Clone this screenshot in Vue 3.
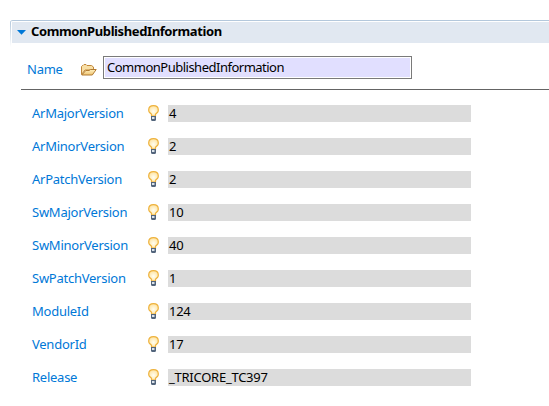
<script setup>
const rows = [
  { label: 'ArMajorVersion', value: '4' },
  { label: 'ArMinorVersion', value: '2' },
  { label: 'ArPatchVersion', value: '2' },
  { label: 'SwMajorVersion', value: '10' },
  { label: 'SwMinorVersion', value: '40' },
  { label: 'SwPatchVersion', value: '1' },
  { label: 'ModuleId', value: '124' },
  { label: 'VendorId', value: '17' },
  { label: 'Release', value: '_TRICORE_TC397' },
]
</script>

<template>
  <main class="panel">
    <header class="header">
      <div class="bar">
        <svg class="arrow" width="9" height="5" viewBox="0 0 9 5"><path d="M0 0H9L4.5 4.8Z" fill="#0078d7" /></svg>
        <h1>CommonPublishedInformation</h1>
      </div>
    </header>
    <div class="name-row">
      <span class="name-label">Name</span>
      <svg class="folder" width="16" height="12" viewBox="0 0 16 12">
        <defs>
          <linearGradient id="folder-fill" x1="0" y1="0" x2="0" y2="1">
            <stop offset="0" stop-color="#fff0c0" />
            <stop offset="1" stop-color="#efc471" />
          </linearGradient>
        </defs>
        <path d="M.5 10.5V2.5L1.5 1.5H2L3 .5H5L6 1.5H10.5L12.5 3V6H4Z" fill="#f8dfa5" stroke="#c1873b" />
        <path d="M.8 11L4.8 6.5H8L9.5 5.5H15.2L11.3 11Z" fill="url(#folder-fill)" stroke="#b17a30" />
      </svg>
      <div class="name-box"><span>CommonPublishedInformation</span></div>
    </div>
    <div class="rule"></div>
    <div class="rows">
      <div v-for="row in rows" :key="row.label" class="row">
        <span class="label">{{ row.label }}</span>
        <svg class="bulb" width="11" height="16" viewBox="0 0 11 16">
          <defs>
            <radialGradient id="bulb-fill" cx=".5" cy=".55" r=".6">
              <stop offset="0" stop-color="#fffef2" />
              <stop offset="1" stop-color="#ffe199" />
            </radialGradient>
          </defs>
          <path d="M3.5 11V9.3L1.4 7.3Q.7 6.4.7 4.9C.7 2.2 2.7.7 5.5.7S10.3 2.2 10.3 4.9Q10.3 6.4 9.6 7.3L7.5 9.3V11Z" fill="url(#bulb-fill)" stroke="#eeb23c" stroke-width="1.2" />
          <path d="M3 11H8V15L7.2 16H3.8L3 15Z" fill="#53657c" />
          <path d="M4 12H6.5V14H4Z" fill="#dbe3eb" />
        </svg>
        <span class="value">{{ row.value }}</span>
      </div>
    </div>
  </main>
</template>

<style>
body {
  margin: 0;
  background: #fff;
}
</style>

<style scoped>
.panel {
  box-sizing: border-box;
  width: 549px;
  height: 406px;
  padding-top: 20px;
  overflow: hidden;
  background: #fff;
  color: #000;
  font: 13px/17px "Noto Sans", "Open Sans", sans-serif;
  letter-spacing: -0.25px;
}
.header {
  box-sizing: border-box;
  height: 27px;
  margin-left: 10px;
  padding-top: 1px;
  border-top: 1px solid #b4c8dc;
  border-top-left-radius: 3px;
  background: linear-gradient(#b4c8dc, #fff) left / 1px 100% no-repeat;
}
.bar {
  display: flex;
  align-items: center;
  height: 21px;
  margin-left: 2px;
  background: #e1e8f1;
}
.arrow {
  margin-left: 5px;
}
h1 {
  margin: 0 0 0 5px;
  padding-bottom: 2px;
  font-size: 13px;
  line-height: 19px;
  letter-spacing: -0.39px;
}
.name-row {
  display: flex;
  height: 23px;
  margin-top: 9px;
  padding-left: 27px;
}
.name-label {
  width: 54px;
  padding-top: 5px;
  color: #0078d7;
}
.folder {
  margin-top: 8px;
}
.name-box {
  box-sizing: border-box;
  width: 309px;
  height: 23px;
  margin-left: 6px;
  padding: 1px;
  border: 1px solid #7a7a7a;
}
.name-box span {
  display: block;
  height: 19px;
  padding-left: 2px;
  line-height: 18px;
  letter-spacing: -0.5px;
  background: #e1dfff;
}
.rule {
  height: 1px;
  margin: 10px 0 15px 21px;
  background: #646464;
}
.rows {
  display: grid;
  row-gap: 16px;
  padding-left: 32px;
}
.row {
  display: flex;
  height: 17px;
}
.label {
  width: 116px;
  line-height: 16px;
  color: #0078d7;
}
.bulb {
  flex: none;
}
.value {
  width: 302px;
  margin-left: 9px;
  padding-left: 1px;
  line-height: 16px;
  background: #dcdcdc;
}
</style>
